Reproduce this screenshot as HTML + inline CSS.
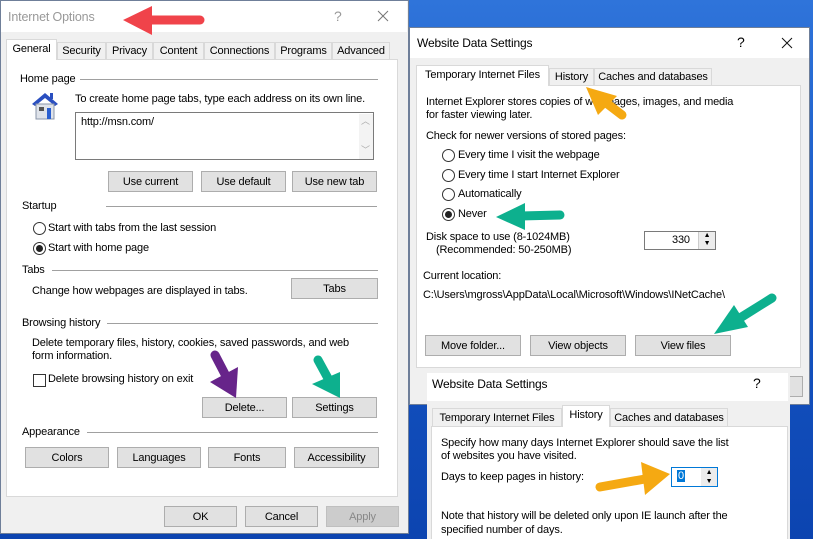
<!DOCTYPE html>
<html><head><meta charset="utf-8">
<style>
*{box-sizing:border-box;margin:0;padding:0}
html{width:813px;height:539px;overflow:hidden}
body{width:813px;height:539px;overflow:hidden;position:relative;background:linear-gradient(180deg,#2f74da 0%,#1656c4 50%,#0c44b0 100%);font-family:"Liberation Sans",sans-serif;font-size:11px;color:#000;letter-spacing:-0.15px}
.a{position:absolute;white-space:nowrap}
.dlg{position:absolute;background:#f0f0f0;border:1px solid #6f7f99}
.title{position:absolute;background:#fff}
.panel{position:absolute;background:#fff;border:1px solid #d9d9d9}
.tab{position:absolute;background:#f0f0f0;border:1px solid #d9d9d9;border-bottom:none;text-align:center;line-height:18px}
.tab.sel{background:#fff;z-index:2}
.btn{position:absolute;background:#e1e1e1;border:1px solid #adadad;text-align:center;line-height:20px}
.hr{position:absolute;height:1px;background:#a0a0a0}
.rad{position:absolute;width:13px;height:13px;border:1px solid #333;border-radius:50%;background:#fff}
.rad.on::after{content:"";position:absolute;left:2px;top:2px;width:7px;height:7px;border-radius:50%;background:#222}
</style></head><body>

<!-- Left dialog -->
<div class="dlg" style="left:0;top:0;width:409px;height:534px"></div>
<div class="title" style="left:1px;top:1px;width:406px;height:31px"></div>
<div class="a" style="left:8px;top:10px;font-size:12.5px;color:#999">Internet Options</div>
<div class="a" style="left:334px;top:8px;font-size:14px;color:#999">?</div>
<svg class="a" style="left:377px;top:10px" width="12" height="12"><path d="M1 1L11 11M11 1L1 11" stroke="#777" stroke-width="1"/></svg>

<div class="panel" style="left:6px;top:59px;width:392px;height:438px"></div>
<div class="tab sel" style="left:6px;top:39px;width:51px;height:21px">General</div>
<div class="tab" style="left:57px;top:42px;width:49px;height:17px;line-height:17px">Security</div>
<div class="tab" style="left:106px;top:42px;width:47px;height:17px;line-height:17px">Privacy</div>
<div class="tab" style="left:153px;top:42px;width:51px;height:17px;line-height:17px">Content</div>
<div class="tab" style="left:204px;top:42px;width:71px;height:17px;line-height:17px">Connections</div>
<div class="tab" style="left:275px;top:42px;width:57px;height:17px;line-height:17px">Programs</div>
<div class="tab" style="left:332px;top:42px;width:58px;height:17px;line-height:17px">Advanced</div>

<div class="a" style="left:20px;top:73px">Home page</div>
<div class="hr" style="left:80px;top:79px;width:298px"></div>
<svg class="a" style="left:28px;top:90px" width="34" height="32" viewBox="0 0 34 32">
<polygon points="4,14 17,3 30,14 27,16 17,8 7,16" fill="#2a4fc0"/>
<rect x="8" y="14" width="18" height="15" fill="#dfe3ea" stroke="#8a95a8"/>
<rect x="11" y="17" width="5" height="4" fill="#555"/>
<rect x="19" y="18" width="4" height="11" fill="#2a5fd0"/>
<rect x="22" y="3" width="3" height="6" fill="#2a4fc0"/>
</svg>
<div class="a" style="left:75px;top:93px">To create home page tabs, type each address on its own line.</div>
<div class="a" style="left:75px;top:112px;width:299px;height:48px;border:1px solid #7a7a7a;background:#fff"></div>
<div class="a" style="left:81px;top:116px">http://msn.com/</div>
<div class="a" style="left:359px;top:114px;width:14px;height:45px;background:#f3f3f3"></div>
<div class="a" style="left:361px;top:114px;font-size:9px;color:#aaa">︿</div>
<div class="a" style="left:361px;top:143px;font-size:9px;color:#aaa">﹀</div>

<div class="btn" style="left:108px;top:171px;width:85px;height:21px">Use current</div>
<div class="btn" style="left:201px;top:171px;width:85px;height:21px">Use default</div>
<div class="btn" style="left:292px;top:171px;width:85px;height:21px">Use new tab</div>

<div class="a" style="left:22px;top:200px">Startup</div>
<div class="hr" style="left:106px;top:206px;width:271px"></div>
<div class="rad" style="left:33px;top:222px"></div>
<div class="a" style="left:48px;top:222px">Start with tabs from the last session</div>
<div class="rad on" style="left:33px;top:242px"></div>
<div class="a" style="left:48px;top:242px">Start with home page</div>

<div class="a" style="left:22px;top:264px">Tabs</div>
<div class="hr" style="left:52px;top:270px;width:326px"></div>
<div class="a" style="left:32px;top:285px">Change how webpages are displayed in tabs.</div>
<div class="btn" style="left:291px;top:278px;width:87px;height:21px">Tabs</div>

<div class="a" style="left:22px;top:317px">Browsing history</div>
<div class="hr" style="left:107px;top:323px;width:271px"></div>
<div class="a" style="left:32px;top:337px">Delete temporary files, history, cookies, saved passwords, and web</div>
<div class="a" style="left:32px;top:350px">form information.</div>
<div class="a" style="left:33px;top:374px;width:13px;height:13px;border:1px solid #333;background:#fff"></div>
<div class="a" style="left:48px;top:373px">Delete browsing history on exit</div>
<div class="btn" style="left:202px;top:397px;width:85px;height:21px">Delete...</div>
<div class="btn" style="left:292px;top:397px;width:85px;height:21px">Settings</div>

<div class="a" style="left:22px;top:426px">Appearance</div>
<div class="hr" style="left:87px;top:432px;width:291px"></div>
<div class="btn" style="left:25px;top:447px;width:84px;height:21px">Colors</div>
<div class="btn" style="left:117px;top:447px;width:84px;height:21px">Languages</div>
<div class="btn" style="left:208px;top:447px;width:78px;height:21px">Fonts</div>
<div class="btn" style="left:294px;top:447px;width:85px;height:21px">Accessibility</div>

<div class="btn" style="left:164px;top:506px;width:73px;height:21px">OK</div>
<div class="btn" style="left:245px;top:506px;width:73px;height:21px">Cancel</div>
<div class="btn" style="left:326px;top:506px;width:73px;height:21px;background:#ccc;border-color:#bfbfbf;color:#888">Apply</div>

<!-- Right dialog 1 -->
<div class="dlg" style="left:409px;top:27px;width:401px;height:378px"></div>
<div class="title" style="left:410px;top:28px;width:399px;height:30px"></div>
<div class="a" style="left:417px;top:36px;font-size:12px">Website Data Settings</div>
<div class="a" style="left:737px;top:34px;font-size:14px">?</div>
<svg class="a" style="left:781px;top:37px" width="12" height="12"><path d="M1 1L11 11M11 1L1 11" stroke="#111" stroke-width="1"/></svg>

<div class="panel" style="left:416px;top:85px;width:385px;height:283px"></div>
<div class="tab sel" style="left:416px;top:65px;width:133px;height:21px">Temporary Internet Files</div>
<div class="tab" style="left:549px;top:68px;width:45px;height:17px;line-height:17px">History</div>
<div class="tab" style="left:594px;top:68px;width:118px;height:17px;line-height:17px">Caches and databases</div>

<div class="a" style="left:426px;top:96px">Internet Explorer stores copies of web pages, images, and media</div>
<div class="a" style="left:426px;top:109px">for faster viewing later.</div>
<div class="a" style="left:426px;top:130px">Check for newer versions of stored pages:</div>
<div class="rad" style="left:442px;top:149px"></div><div class="a" style="left:458px;top:149px">Every time I visit the webpage</div>
<div class="rad" style="left:442px;top:169px"></div><div class="a" style="left:458px;top:169px">Every time I start Internet Explorer</div>
<div class="rad" style="left:442px;top:188px"></div><div class="a" style="left:458px;top:188px">Automatically</div>
<div class="rad on" style="left:442px;top:208px"></div><div class="a" style="left:458px;top:208px">Never</div>
<div class="a" style="left:426px;top:231px">Disk space to use (8-1024MB)</div>
<div class="a" style="left:436px;top:244px">(Recommended: 50-250MB)</div>
<div class="a" style="left:644px;top:231px;width:72px;height:19px;border:1px solid #7a7a7a;background:#fff"></div>
<div class="a" style="left:672px;top:234px">330</div>
<div class="a" style="left:698px;top:232px;width:17px;height:17px;background:#ececec;border-left:1px solid #ccc;font-size:7px;line-height:8px;text-align:center">▲<br>▼</div>
<div class="a" style="left:423px;top:270px">Current location:</div>
<div class="a" style="left:423px;top:289px">C:\Users\mgross\AppData\Local\Microsoft\Windows\INetCache\</div>
<div class="btn" style="left:425px;top:335px;width:96px;height:21px">Move folder...</div>
<div class="btn" style="left:530px;top:335px;width:96px;height:21px">View objects</div>
<div class="btn" style="left:635px;top:335px;width:96px;height:21px">View files</div>
<div class="btn" style="left:770px;top:376px;width:33px;height:21px"></div>

<!-- Right dialog 2 -->
<div class="a" style="left:427px;top:373px;width:363px;height:166px;background:#f0f0f0"></div>
<div class="title" style="left:427px;top:373px;width:361px;height:28px"></div>
<div class="a" style="left:432px;top:377px;font-size:12px">Website Data Settings</div>
<div class="a" style="left:753px;top:375px;font-size:14px">?</div>
<div class="panel" style="left:431px;top:426px;width:357px;height:113px;border-bottom:none"></div>
<div class="tab" style="left:432px;top:408px;width:130px;height:18px">Temporary Internet Files</div>
<div class="tab sel" style="left:562px;top:405px;width:48px;height:22px">History</div>
<div class="tab" style="left:610px;top:408px;width:118px;height:18px">Caches and databases</div>
<div class="a" style="left:441px;top:437px">Specify how many days Internet Explorer should save the list</div>
<div class="a" style="left:441px;top:450px">of websites you have visited.</div>
<div class="a" style="left:441px;top:471px">Days to keep pages in history:</div>
<div class="a" style="left:671px;top:467px;width:47px;height:20px;border:1px solid #0078d7;background:#fff"></div>
<div class="a" style="left:677px;top:470px;background:#0078d7;color:#fff;padding:0 1px">0</div>
<div class="a" style="left:701px;top:468px;width:16px;height:18px;background:#ececec;font-size:7px;line-height:9px;text-align:center">▲<br>▼</div>
<div class="a" style="left:441px;top:510px">Note that history will be deleted only upon IE launch after the</div>
<div class="a" style="left:441px;top:524px">specified number of days.</div>

<!-- Arrows -->
<svg class="a" style="left:0;top:0" width="813" height="539" viewBox="0 0 813 539">
<g stroke-linecap="round" fill="none" stroke-width="9">
<line x1="200" y1="20" x2="145" y2="20" stroke="#f0434a"/>
<line x1="215" y1="355" x2="228" y2="380" stroke="#67248a"/>
<line x1="318" y1="360" x2="330" y2="382" stroke="#0db08e"/>
<line x1="560" y1="215" x2="520" y2="216" stroke="#0db08e"/>
<line x1="622" y1="115" x2="605" y2="102" stroke="#f5a912"/>
<line x1="772" y1="298" x2="740" y2="318" stroke="#0db08e"/>
<line x1="600" y1="487" x2="645" y2="479" stroke="#f5a912"/>
</g>
<polygon points="123,20 152,6 152,35" fill="#f0434a"/>
<polygon points="236,398 210,382 238,367" fill="#67248a"/>
<polygon points="340,398 312,384 340,372" fill="#0db08e"/>
<polygon points="496,217 525,203 525,230" fill="#0db08e"/>
<polygon points="586,87 617,96 598,115" fill="#f5a912"/>
<polygon points="714,334 734,305 748,327" fill="#0db08e"/>
<polygon points="670,474 641,462 645,495" fill="#f5a912"/>
</svg>
</body></html>
